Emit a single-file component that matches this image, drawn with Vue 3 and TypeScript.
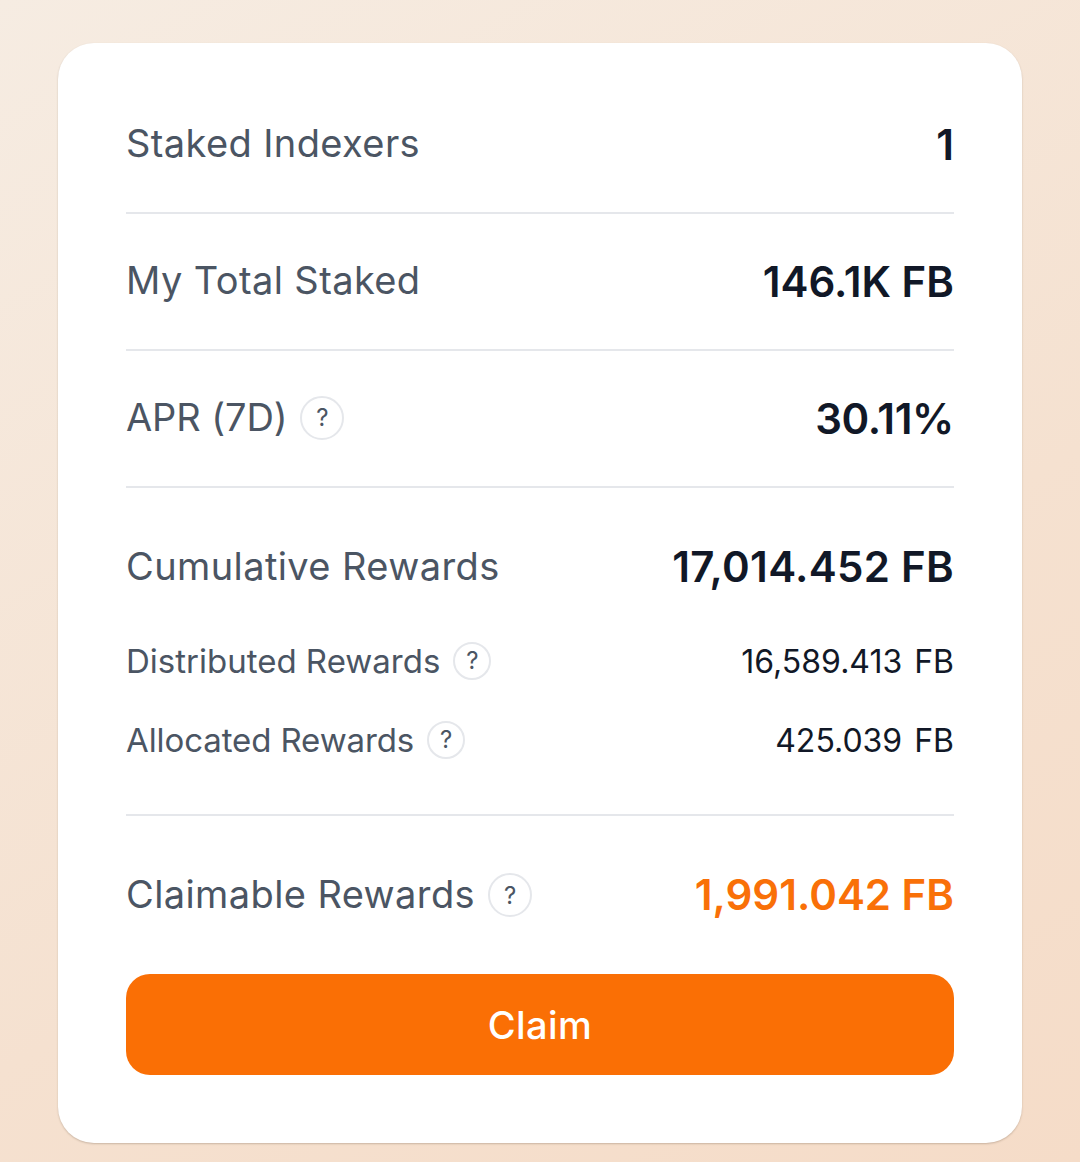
<script setup lang="ts">
const help = true
</script>

<template>
  <div class="page">
    <section class="card">
      <div class="row">
        <span class="label">Staked Indexers</span>
        <strong class="value">1</strong>
      </div>
      <div class="row">
        <span class="label">My Total Staked</span>
        <strong class="value">146.1K FB</strong>
      </div>
      <div class="row">
        <span class="label narrow">APR (7D)<i v-if="help" class="help big">?</i></span>
        <strong class="value tight">30.11%</strong>
      </div>
      <div class="group">
        <div class="main">
          <span class="label">Cumulative Rewards</span>
          <strong class="value wide">17,014.452 FB</strong>
        </div>
        <div class="sub">
          <span class="sublabel">Distributed Rewards<i class="help">?</i></span>
          <span class="subvalue">16,589.413 FB</span>
        </div>
        <div class="sub">
          <span class="sublabel narrow">Allocated Rewards<i class="help">?</i></span>
          <span class="subvalue">425.039 FB</span>
        </div>
      </div>
      <div class="claimrow">
        <span class="label">Claimable Rewards<i class="help big">?</i></span>
        <strong class="value orange">1,991.042 FB</strong>
      </div>
      <button class="claim">Claim</button>
    </section>
  </div>
</template>

<style>
html, body { margin: 0; padding: 0; }
</style>

<style scoped>
.page {
  width: 1080px;
  height: 1162px;
  box-sizing: border-box;
  padding: 43px 58px 0;
  overflow: hidden;
  background: linear-gradient(150deg, #f6ece2, #f5e1d0 60%, #f5dcc8);
  font-family: "Inter", "Noto Sans", sans-serif;
}
.card {
  height: 1100px;
  box-sizing: border-box;
  padding: 34px 68px;
  background: #fff;
  border-radius: 36px;
  box-shadow: 0 1px 2px rgba(90, 70, 50, 0.28);
}
.row {
  height: 137px;
  box-sizing: border-box;
  padding-bottom: 4px;
  display: flex;
  justify-content: space-between;
  align-items: center;
  border-bottom: 2px solid #e5e7eb;
}
.label {
  display: flex;
  align-items: center;
  height: 50px;
  color: #4b5563;
  font-size: 38px;
  letter-spacing: 0.4px;
  white-space: nowrap;
}
.label.narrow { letter-spacing: -0.1px; }
.value {
  color: #111827;
  font-size: 42px;
  font-weight: 600;
  line-height: 50px;
  white-space: nowrap;
  transform: translateY(2px);
}
.value.tight { letter-spacing: -0.3px; }
.value.wide { letter-spacing: 0.3px; transform: translateY(1px); }
.value.orange { color: #f97008; transform: translateY(1px); }
.help {
  display: inline-flex;
  align-items: center;
  justify-content: center;
  box-sizing: border-box;
  width: 38px;
  height: 38px;
  margin-left: 13px;
  border: 2px solid #e5e7eb;
  border-radius: 50%;
  color: #4b5563;
  font-size: 24px;
  font-style: normal;
  font-weight: 400;
  letter-spacing: 0;
}
.help.big { width: 44px; height: 44px; transform: translateY(1px); }
.group {
  padding: 53px 0 35px;
  border-bottom: 2px solid #e5e7eb;
}
.main, .sub, .claimrow {
  display: flex;
  justify-content: space-between;
  align-items: center;
}
.main { margin-bottom: 30px; }
.sub { height: 79px; }
.sublabel {
  display: flex;
  align-items: center;
  color: #4b5563;
  font-size: 33px;
  white-space: nowrap;
}
.sublabel.narrow { letter-spacing: -0.1px; }
.subvalue {
  color: #111827;
  font-size: 32px;
  word-spacing: 3px;
  white-space: nowrap;
  transform: translateY(1px);
}
.claimrow { padding-top: 53px; }
.claim {
  display: block;
  width: 100%;
  height: 101px;
  margin-top: 55px;
  border: 0;
  border-radius: 24px;
  background: #fa6f05;
  color: #fff;
  font: 500 38px "Inter", sans-serif;
  letter-spacing: 0.4px;
}
</style>
